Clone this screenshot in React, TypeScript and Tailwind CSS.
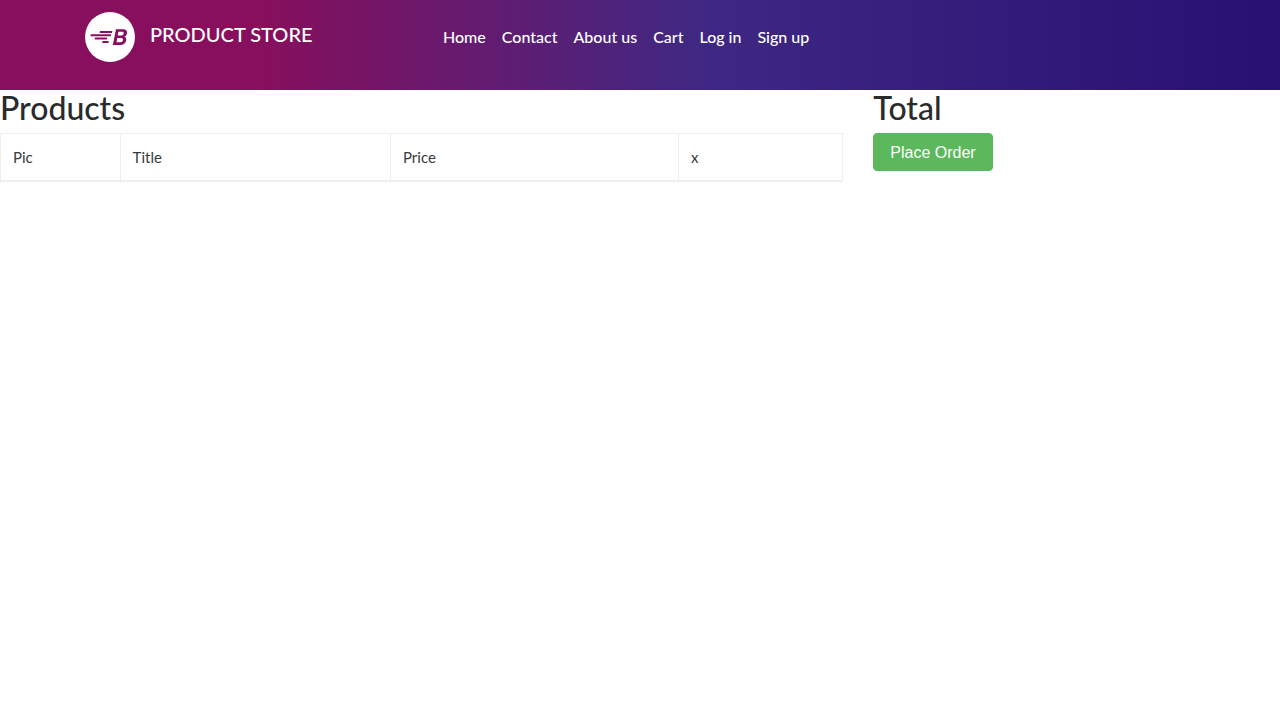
const navLinks = ['Home', 'Contact', 'About us', 'Cart', 'Log in', 'Sign up'];

const columns = [
  { label: 'Pic', width: 'w-[14.2%]' },
  { label: 'Title', width: 'w-[32.1%]' },
  { label: 'Price', width: 'w-[34.2%]' },
  { label: 'x', width: 'w-[19.5%]' },
];

function Logo() {
  return (
    <svg viewBox="0 0 50 50" className="size-[50px] shrink-0" aria-hidden="true">
      <circle cx="25" cy="25" r="25" fill="#fff" />
      <g fill="#880f5d">
        <path d="M15 19h12.400l-.5 2H14.600zM5.800 22.300h20.400l-.5 2H5.400zM10 25.600h12.200l-.5 2H9.600zM17.600 28.900h6.200l-.5 2h-6.100z" />
        <path
          fillRule="evenodd"
          d="M31 17.200h6.900c3 0 4.500 1.500 4.100 4-.2 1.700-1.200 2.900-2.800 3.400 1.600.5 2.200 1.800 2 3.600-.4 3-2.800 4.800-6.200 4.800H27.800zM33.400 19.800l-.7 3.800h3.400c1.500 0 2.400-.7 2.600-2 .2-1.200-.5-1.800-1.900-1.800zM32.300 26l-.8 4.300h3.600c1.700 0 2.700-.8 2.900-2.200.2-1.400-.6-2.100-2.100-2.100z"
        />
      </g>
    </svg>
  );
}

export default function App() {
  return (
    <div className="overflow-x-hidden font-[Lato,sans-serif] text-[#292b2c]">
      <header className="h-[90px] bg-[linear-gradient(90deg,#880f5d_20%,#3f2883_55%,#280f73_100%)] text-white">
        <div className="mx-auto flex w-full max-w-[1140px] items-start px-[15px] pt-3">
          <a href="#" className="flex w-[350px] shrink-0 gap-[15px] text-xl font-medium">
            <Logo />
            <span className="pt-2">PRODUCT STORE</span>
          </a>
          <nav className="flex gap-4 pt-[13px] pl-2 text-base font-medium">
            {navLinks.map((label) => (
              <a key={label} href="#">
                {label}
              </a>
            ))}
          </nav>
        </div>
      </header>
      <main className="-mx-[15px] flex">
        <section className="w-2/3 px-[15px]">
          <h2 className="mb-2 text-[32px] leading-[35px] font-medium">Products</h2>
          <table className="w-full border-collapse border border-[#eceeef] text-left text-[15px] text-[#373a3c]">
            <thead>
              <tr className="h-[47px] border-b-2 border-[#eceeef]">
                {columns.map(({ label, width }) => (
                  <th key={label} className={`${width} border-x border-[#eceeef] px-3 font-normal`}>
                    {label}
                  </th>
                ))}
              </tr>
            </thead>
          </table>
        </section>
        <aside className="w-1/3 px-[15px]">
          <h2 className="mb-2 text-[32px] leading-[35px] font-medium">Total</h2>
          <button
            type="button"
            className="rounded border border-[#5cb85c] bg-[#5cb85c] px-4 pt-[7px] pb-[5px] font-['Liberation_Sans',sans-serif] text-base text-white"
          >
            Place Order
          </button>
        </aside>
      </main>
    </div>
  );
}
